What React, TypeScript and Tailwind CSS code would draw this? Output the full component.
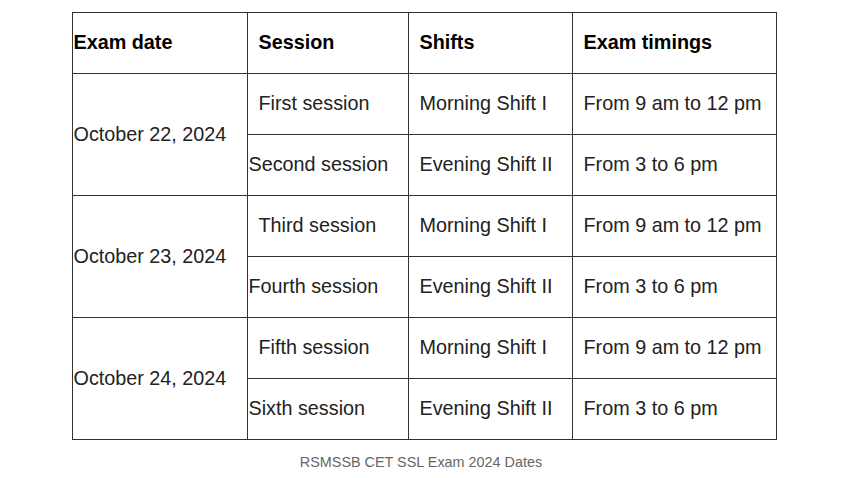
import React from "react";

const rows = [
  { date: "October 22, 2024", sessions: [
    { s: "First session", indent: true, shift: "Morning Shift I", time: "From 9 am to 12 pm" },
    { s: "Second session", indent: false, shift: "Evening Shift II", time: "From 3 to 6 pm" },
  ]},
  { date: "October 23, 2024", sessions: [
    { s: "Third session", indent: true, shift: "Morning Shift I", time: "From 9 am to 12 pm" },
    { s: "Fourth session", indent: false, shift: "Evening Shift II", time: "From 3 to 6 pm" },
  ]},
  { date: "October 24, 2024", sessions: [
    { s: "Fifth session", indent: true, shift: "Morning Shift I", time: "From 9 am to 12 pm" },
    { s: "Sixth session", indent: false, shift: "Evening Shift II", time: "From 3 to 6 pm" },
  ]},
];

export default function App() {
  return (
    <div className="w-[850px] h-[478px] bg-white flex flex-col items-center pt-[12px]" style={{ fontFamily: '"Liberation Sans", Arial, sans-serif' }}>
      <table className="border-collapse w-[704px] table-fixed text-[19.8px] text-[#222] -translate-x-[1px]">
        <colgroup>
          <col className="w-[175px]" />
          <col className="w-[161px]" />
          <col className="w-[164px]" />
          <col className="w-[204px]" />
        </colgroup>
        <thead>
          <tr className="h-[61px]">
            <th className="border border-[#333] text-left font-bold text-black pl-[1px]">Exam date</th>
            <th className="border border-[#333] text-left font-bold text-black pl-[11px]">Session</th>
            <th className="border border-[#333] text-left font-bold text-black pl-[11px]">Shifts</th>
            <th className="border border-[#333] text-left font-bold text-black pl-[11px]">Exam timings</th>
          </tr>
        </thead>
        <tbody>
          {rows.map((r) =>
            r.sessions.map((s, i) => (
              <tr key={r.date + i} className="h-[61px]">
                {i === 0 && (
                  <td rowSpan={2} className="border border-[#333] pl-[1px] whitespace-nowrap">{r.date}</td>
                )}
                <td className={`border border-[#333] whitespace-nowrap ${s.indent ? "pl-[11px]" : "pl-[1px]"}`}>{s.s}</td>
                <td className="border border-[#333] pl-[11px] whitespace-nowrap">{s.shift}</td>
                <td className="border border-[#333] pl-[11px] whitespace-nowrap">{s.time}</td>
              </tr>
            ))
          )}
        </tbody>
      </table>
      <div className="mt-[12px] text-[14.4px] text-[#666] -translate-x-[4px]">RSMSSB CET SSL Exam 2024 Dates</div>
    </div>
  );
}
